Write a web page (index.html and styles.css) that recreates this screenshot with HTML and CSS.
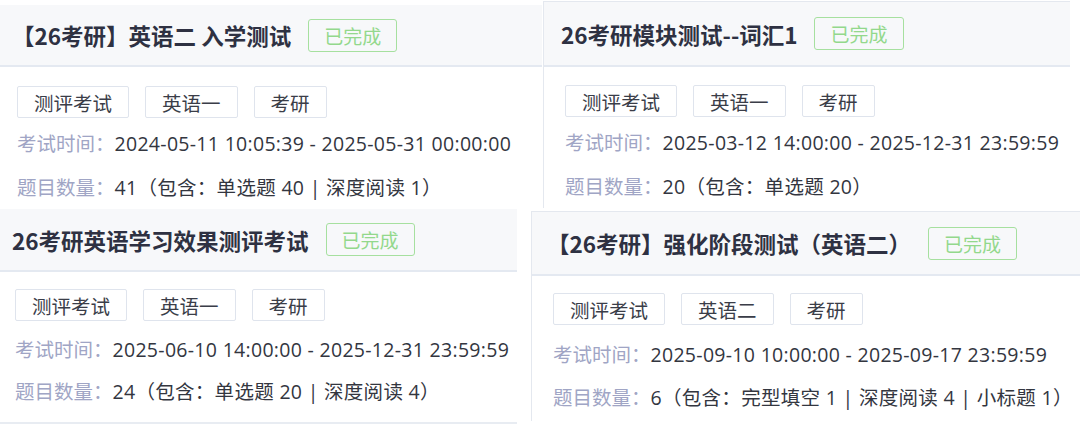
FILE: index.html
```html
<!DOCTYPE html>
<html lang="zh-CN">
<head>
  <meta charset="UTF-8">
  <meta name="viewport" content="width=device-width, initial-scale=1.0">
  <title>考试列表</title>
  <link rel="stylesheet" href="styles.css">
</head>
<body>
  <div class="board">
    <div class="row row-top">
      <div class="card card-a">
        <div class="card-head">
          <span class="title">【26考研】英语二 入学测试</span>
          <span class="badge">已完成</span>
        </div>
        <div class="card-body">
          <div class="tags">
            <span class="tag">测评考试</span>
            <span class="tag">英语一</span>
            <span class="tag">考研</span>
          </div>
          <div class="info"><span class="label">考试时间：</span><span class="val">2024-05-11 10:05:39 - 2025-05-31 00:00:00</span></div>
          <div class="info"><span class="label">题目数量：</span><span class="val">41（包含：单选题 40 | 深度阅读 1）</span></div>
        </div>
      </div>
      <div class="card card-b">
        <div class="card-head">
          <span class="title">26考研模块测试--词汇1</span>
          <span class="badge">已完成</span>
        </div>
        <div class="card-body">
          <div class="tags">
            <span class="tag">测评考试</span>
            <span class="tag">英语一</span>
            <span class="tag">考研</span>
          </div>
          <div class="info"><span class="label">考试时间：</span><span class="val">2025-03-12 14:00:00 - 2025-12-31 23:59:59</span></div>
          <div class="info"><span class="label">题目数量：</span><span class="val">20（包含：单选题 20）</span></div>
        </div>
      </div>
    </div>
    <div class="row row-bottom">
      <div class="card card-c">
        <div class="card-head">
          <span class="title">26考研英语学习效果测评考试</span>
          <span class="badge">已完成</span>
        </div>
        <div class="card-body">
          <div class="tags">
            <span class="tag">测评考试</span>
            <span class="tag">英语一</span>
            <span class="tag">考研</span>
          </div>
          <div class="info"><span class="label">考试时间：</span><span class="val">2025-06-10 14:00:00 - 2025-12-31 23:59:59</span></div>
          <div class="info"><span class="label">题目数量：</span><span class="val">24（包含：单选题 20 | 深度阅读 4）</span></div>
        </div>
      </div>
      <div class="card card-d">
        <div class="card-head">
          <span class="title">【26考研】强化阶段测试（英语二）</span>
          <span class="badge">已完成</span>
        </div>
        <div class="card-body">
          <div class="tags">
            <span class="tag">测评考试</span>
            <span class="tag">英语二</span>
            <span class="tag">考研</span>
          </div>
          <div class="info"><span class="label">考试时间：</span><span class="val">2025-09-10 10:00:00 - 2025-09-17 23:59:59</span></div>
          <div class="info"><span class="label">题目数量：</span><span class="val">6（包含：完型填空 1 | 深度阅读 4 | 小标题 1）</span></div>
        </div>
      </div>
    </div>
  </div>
</body>
</html>
```

FILE: styles.css
```css
*{
  box-sizing: border-box;
}
body{
  margin:0;
  background:#fff;
  font-family: "Open Sans", "Noto Sans CJK SC", sans-serif;
  font-size:19.5px;
  color:#33363f;
}
.board{
  width:1080px;
  height:431px;
  overflow:hidden;
}
.row{
  display:flex;
  align-items:flex-start;
}
.row-top{
  height:209px;
}
.card{
  background:#fff;
  white-space:nowrap;
}
.card-head{
  display:flex;
  align-items:center;
  gap:17px;
  background:#f7f8fa;
  border-bottom:2px solid #e4e9f1;
}
.title{
  font-family: "Noto Sans CJK SC", sans-serif;
  font-weight:700;
  font-size:22.5px;
  color:#2e3142;
}
.badge{
  display:flex;
  align-items:center;
  height:33px;
  padding:0 15px;
  border:1px solid #a6e09f;
  border-radius:3px;
  color:#93d88c;
  font-family: "Noto Sans CJK SC", sans-serif;
  font-size:19px;
}
.tags{
  display:flex;
  gap:16px;
}
.tag{
  display:flex;
  align-items:center;
  height:32px;
  padding:0 16px;
  border:1px solid #dfe4ed;
  border-radius:2px;
  color:#3a3d48;
  font-family: "Noto Sans CJK SC", sans-serif;
}
.label{
  color:#a0a5c5;
  font-family: "Noto Sans CJK SC", sans-serif;
}
.val{
  letter-spacing:0.3px;
}

/* 左上 */
.card-a{
  width:542px;
  margin-top:5px;
}
.card-a .card-head{
  height:62px;
  padding-left:12px;
}
.card-a .card-body{
  padding:19px 17px 0;
}
.card-a .tags{
  margin-bottom:3px;
}
.card-a .info{
  line-height:43px;
}

/* 右上 */
.card-b{
  width:527px;
  height:207px;
  margin-left:1px;
  margin-top:1px;
  border-top:1px solid #e4e8ef;
  border-left:1px solid #e4e8ef;
}
.card-b .card-head{
  height:65px;
  padding-left:17px;
}
.card-b .card-body{
  padding:18px 21px 0;
}
.card-b .tags{
  margin-bottom:3px;
}
.card-b .info{
  line-height:43px;
}

/* 左下 */
.card-c{
  width:517px;
  padding-bottom:10px;
  border-bottom:2px solid #e8ecf2;
}
.card-c .card-head{
  height:63px;
  padding-left:12px;
}
.card-c .card-body{
  padding:17px 15px 0;
}
.card-c .tags{
  margin-bottom:7px;
}
.card-c .info{
  line-height:41px;
}

/* 右下 */
.card-d{
  width:549px;
  height:210px;
  margin-left:14px;
  margin-top:2px;
  border-top:1px solid #e4e8ef;
  border-left:1px solid #e4e8ef;
}
.card-d .card-head{
  height:64px;
  padding-left:15px;
}
.card-d .card-body{
  padding:17px 21px 0;
}
.card-d .tags{
  margin-bottom:8px;
}
.card-d .info{
  line-height:42px;
}
```
